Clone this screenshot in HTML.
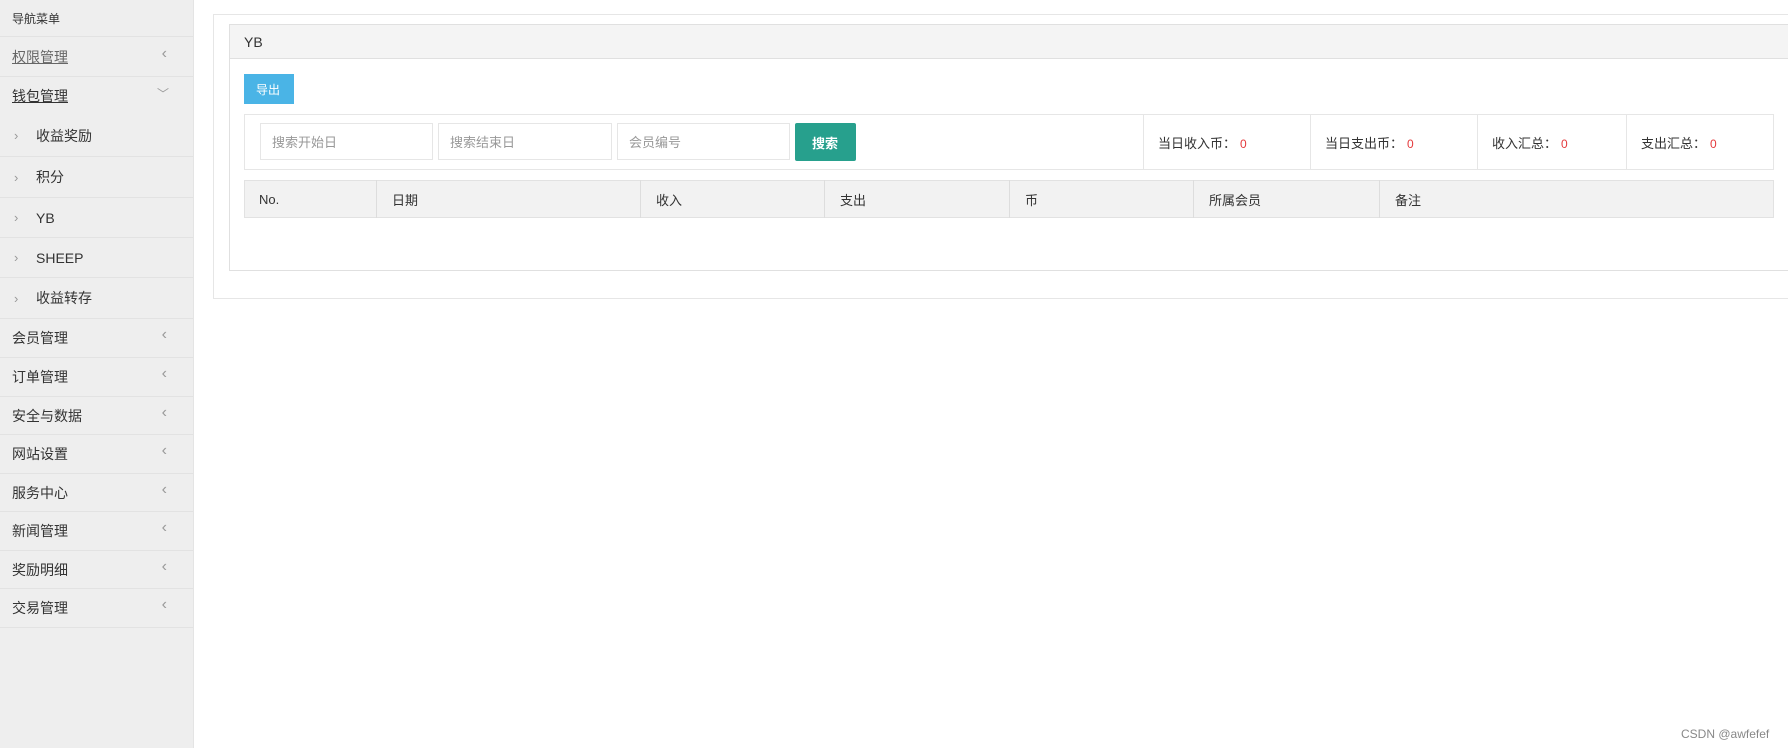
<!DOCTYPE html>
<html><head><meta charset="utf-8"><style>
*{margin:0;padding:0;box-sizing:border-box}
body{width:1788px;height:748px;background:#fff;font-family:"Liberation Sans","Noto Sans CJK SC",sans-serif;color:#333;position:relative;overflow:hidden}
.sb{position:absolute;left:0;top:0;width:194px;height:748px;background:#eeeeee;border-right:1px solid #e4e4e4}
.it{position:absolute;left:0;width:193px;border-bottom:1px solid #e2e2e2;font-size:14px;display:flex;align-items:center;padding-left:12px;color:#333}
.ar{position:absolute;right:26px;color:#999;font-size:16px;margin-top:-6px}
.sub{padding-left:36px}
.sub .ch{position:absolute;left:14px;color:#999;font-size:13px}
.a{position:absolute}
.inp{position:absolute;top:123px;height:37px;border:1px solid #e6e6e6;background:#fff;font-size:13px;color:#999;padding-left:11px;display:flex;align-items:center}
.th{position:absolute;top:180px;height:38px;border-left:1px solid #ddd;font-size:13px;padding-left:15px;color:#333;display:flex;align-items:center}
.st{position:absolute;top:114px;height:56px;border-left:1px solid #e6e6e6;font-size:13px;padding-left:14px;display:flex;align-items:center}
.st b{color:#e4393c;font-weight:normal;font-size:12px;margin-left:4px}
</style></head><body>
<div class="sb">
<div class="it" style="top:0;height:37px;font-size:12px">导航菜单</div>
<div class="it" style="top:37px;height:40px;color:#666"><u>权限管理</u><span class="ar">‹</span></div>
<div class="it" style="top:77px;height:38px;border-bottom:none"><u>钱包管理</u><span class="ar" style="font-size:12px;right:24px">﹀</span></div>
<div class="it sub" style="top:115px;height:42px"><span class="ch">›</span>收益奖励</div>
<div class="it sub" style="top:157px;height:41px"><span class="ch">›</span>积分</div>
<div class="it sub" style="top:198px;height:40px"><span class="ch">›</span>YB</div>
<div class="it sub" style="top:238px;height:40px"><span class="ch">›</span>SHEEP</div>
<div class="it sub" style="top:278px;height:41px"><span class="ch">›</span>收益转存</div>
<div class="it" style="top:319px;height:39px">会员管理<span class="ar">‹</span></div>
<div class="it" style="top:358px;height:39px">订单管理<span class="ar">‹</span></div>
<div class="it" style="top:397px;height:38px">安全与数据<span class="ar">‹</span></div>
<div class="it" style="top:435px;height:39px">网站设置<span class="ar">‹</span></div>
<div class="it" style="top:474px;height:38px">服务中心<span class="ar">‹</span></div>
<div class="it" style="top:512px;height:39px">新闻管理<span class="ar">‹</span></div>
<div class="it" style="top:551px;height:38px">奖励明细<span class="ar">‹</span></div>
<div class="it" style="top:589px;height:39px">交易管理<span class="ar">‹</span></div>
</div>
<div class="a" style="left:213px;top:14px;width:1600px;height:285px;border:1px solid #e6e6e6;border-right:none"></div>
<div class="a" style="left:229px;top:24px;width:1600px;height:247px;border:1px solid #e0e0e0;border-right:none"></div>
<div class="a" style="left:230px;top:25px;width:1580px;height:34px;background:#f4f4f4;border-bottom:1px solid #e0e0e0;font-size:14px;padding:9px 0 0 14px">YB</div>
<div class="a" style="left:244px;top:74px;width:50px;height:30px;background:#4ab4e6;color:#fff;font-size:12px;padding-left:12px;display:flex;align-items:center">导出</div>
<div class="a" style="left:244px;top:114px;width:1530px;height:56px;border:1px solid #e6e6e6"></div>
<div class="inp" style="left:260px;width:173px">搜索开始日</div>
<div class="inp" style="left:438px;width:174px">搜索结束日</div>
<div class="inp" style="left:617px;width:173px">会员编号</div>
<div class="a" style="left:795px;top:123px;width:61px;height:38px;background:#27a08d;color:#fff;font-size:13px;font-weight:bold;padding-left:17px;border-radius:2px;display:flex;align-items:center">搜索</div>
<div class="st" style="left:1143px"><span>当日收入币：<b>0</b></span></div>
<div class="st" style="left:1310px"><span>当日支出币：<b>0</b></span></div>
<div class="st" style="left:1477px"><span>收入汇总：<b>0</b></span></div>
<div class="st" style="left:1626px"><span>支出汇总：<b>0</b></span></div>
<div class="a" style="left:244px;top:180px;width:1530px;height:38px;background:#f2f2f2;border:1px solid #e2e2e2"></div>
<div class="th" style="left:244px;border-left:none">No.</div>
<div class="th" style="left:376px">日期</div>
<div class="th" style="left:640px">收入</div>
<div class="th" style="left:824px">支出</div>
<div class="th" style="left:1009px">币</div>
<div class="th" style="left:1193px">所属会员</div>
<div class="th" style="left:1379px">备注</div>
<div class="a" style="left:1681px;top:727px;font-size:12px;color:#888">CSDN @awfefef</div>
</body></html>
